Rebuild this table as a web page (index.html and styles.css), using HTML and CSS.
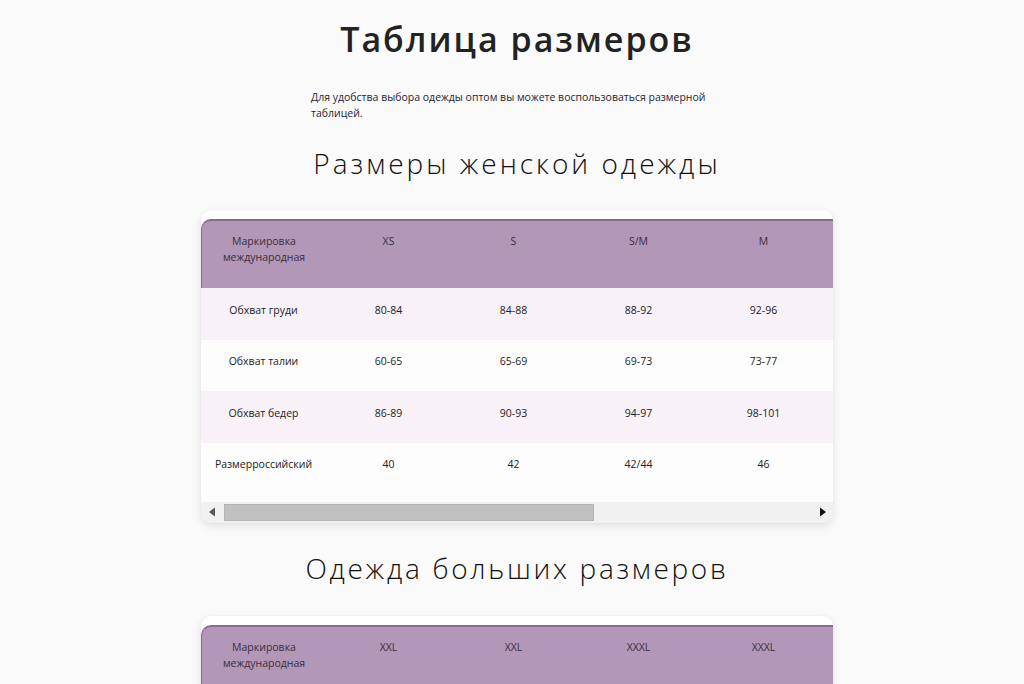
FILE: index.html
```html
<!DOCTYPE html>
<html lang="ru">
<head>
<meta charset="utf-8">
<title>Таблица размеров</title>
<link rel="stylesheet" href="styles.css">
</head>
<body>
<main class="page">
  <h1 class="title">Таблица размеров</h1>
  <p class="intro">Для удобства выбора одежды оптом вы можете воспользоваться размерной таблицей.</p>

  <h2 class="section-title">Размеры женской одежды</h2>
  <div class="card">
    <div class="table-wrap">
      <table class="sizes">
        <thead>
          <tr><th>Маркировка международная</th><th>XS</th><th>S</th><th>S/M</th><th>M</th><th>M/L</th><th>L</th><th>XL</th></tr>
        </thead>
        <tbody>
          <tr><td>Обхват груди</td><td>80-84</td><td>84-88</td><td>88-92</td><td>92-96</td><td>96-100</td><td>100-104</td><td>104-108</td></tr>
          <tr><td>Обхват талии</td><td>60-65</td><td>65-69</td><td>69-73</td><td>73-77</td><td>77-81</td><td>81-85</td><td>85-89</td></tr>
          <tr><td>Обхват бедер</td><td>86-89</td><td>90-93</td><td>94-97</td><td>98-101</td><td>102-105</td><td>106-109</td><td>110-113</td></tr>
          <tr class="last"><td>Размерроссийский</td><td>40</td><td>42</td><td>42/44</td><td>46</td><td>46/48</td><td>48</td><td>50</td></tr>
        </tbody>
      </table>
    </div>
    <div class="scrollbar" aria-hidden="true">
      <span class="sb-btn sb-left"><svg width="8" height="10" viewBox="0 0 8 10"><path d="M1 5 L7 0.5 L7 9.5 Z" fill="#555"/></svg></span>
      <span class="sb-track"><span class="sb-thumb"></span></span>
      <span class="sb-btn sb-right"><svg width="8" height="10" viewBox="0 0 8 10"><path d="M1 0.5 L7 5 L1 9.5 Z" fill="#111"/></svg></span>
    </div>
  </div>

  <h2 class="section-title second">Одежда больших размеров</h2>
  <div class="card card-second">
    <div class="table-wrap">
      <table class="sizes">
        <thead>
          <tr><th>Маркировка международная</th><th>XXL</th><th>XXL</th><th>XXXL</th><th>XXXL</th><th>4XL</th><th>4XL</th><th>5XL</th></tr>
        </thead>
        <tbody>
          <tr><td>Обхват груди</td><td>108-112</td><td>112-116</td><td>116-120</td><td>120-124</td><td>124-128</td><td>128-132</td><td>132-136</td></tr>
          <tr><td>Обхват талии</td><td>89-93</td><td>93-97</td><td>97-101</td><td>101-105</td><td>105-109</td><td>109-113</td><td>113-117</td></tr>
          <tr><td>Обхват бедер</td><td>114-117</td><td>118-121</td><td>122-125</td><td>126-129</td><td>130-133</td><td>134-137</td><td>138-141</td></tr>
          <tr class="last"><td>Размерроссийский</td><td>52</td><td>54</td><td>56</td><td>58</td><td>60</td><td>62</td><td>64</td></tr>
        </tbody>
      </table>
    </div>
    <div class="scrollbar" aria-hidden="true">
      <span class="sb-btn sb-left"><svg width="8" height="10" viewBox="0 0 8 10"><path d="M1 5 L7 0.5 L7 9.5 Z" fill="#555"/></svg></span>
      <span class="sb-track"><span class="sb-thumb"></span></span>
      <span class="sb-btn sb-right"><svg width="8" height="10" viewBox="0 0 8 10"><path d="M1 0.5 L7 5 L1 9.5 Z" fill="#111"/></svg></span>
    </div>
  </div>
</main>
</body>
</html>
```

FILE: styles.css
```css
html, body {
  margin: 0;
  padding: 0;
  background: #fafafa;
}

body {
  font-family: "Open Sans", "DejaVu Sans", sans-serif;
  color: #222;
}

.page {
  width: 632px;
  margin: 0 auto;
  padding: 0 0 40px 10px;
}

.title {
  margin: 18px 0 0;
  font-size: 34px;
  line-height: 42px;
  font-weight: 600;
  letter-spacing: 2px;
  text-align: center;
  color: #222;
}

.intro {
  width: 412px;
  margin: 29px auto 0;
  font-size: 10.5px;
  line-height: 16px;
  color: #1f1f33;
}

.section-title {
  margin: 24px 0 0;
  font-size: 28px;
  line-height: 36px;
  font-weight: 300;
  letter-spacing: 3px;
  text-align: center;
  color: #111;
}

.section-title.second {
  margin-top: 27px;
  letter-spacing: 2.7px;
}

.card {
  margin-top: 29px;
  padding-top: 9px;
  background: #fff;
  border-radius: 10px;
  box-shadow: 0 3px 8px rgba(0, 0, 0, 0.10), 0 0 2px rgba(0, 0, 0, 0.06);
  overflow: hidden;
}

.card-second {
  margin-top: 30px;
}

.table-wrap {
  overflow: hidden;
}

.scrollbar {
  display: flex;
  height: 21px;
  background: #f1f1f1;
}

.sb-btn {
  display: flex;
  align-items: center;
  justify-content: center;
  width: 21px;
  flex: none;
}

.sb-track {
  flex: 1;
  display: flex;
  padding: 2px 0;
}

.sb-thumb {
  width: 370px;
  margin-left: 2px;
  background: #c1c1c1;
  border: 1px solid #b4b4b4;
  box-sizing: border-box;
}

.sizes {
  border-collapse: separate;
  border-spacing: 0;
  table-layout: fixed;
  width: 1000px;
  font-size: 10.5px;
  line-height: 16px;
  color: #222;
}

.sizes th,
.sizes td {
  width: 125px;
  text-align: center;
  padding: 0 8px;
  box-sizing: border-box;
}

.sizes th {
  height: 69px;
  vertical-align: top;
  padding-top: 12px;
  font-weight: 400;
  color: #3a2d3d;
  background: #b397b8;
  border-top: 2px solid #8d6991;
}

.sizes th:first-child {
  border-left: 1px solid #8d6991;
  border-top-left-radius: 10px;
}

.sizes td {
  height: 51.5px;
  vertical-align: middle;
  padding-bottom: 8px;
}

.sizes tbody tr:nth-child(odd) td {
  background: #f8f1f8;
}

.sizes tbody tr:nth-child(even) td {
  background: #fdfdfd;
}

.sizes tbody tr.last td {
  height: 59px;
  padding-bottom: 16px;
}
```
